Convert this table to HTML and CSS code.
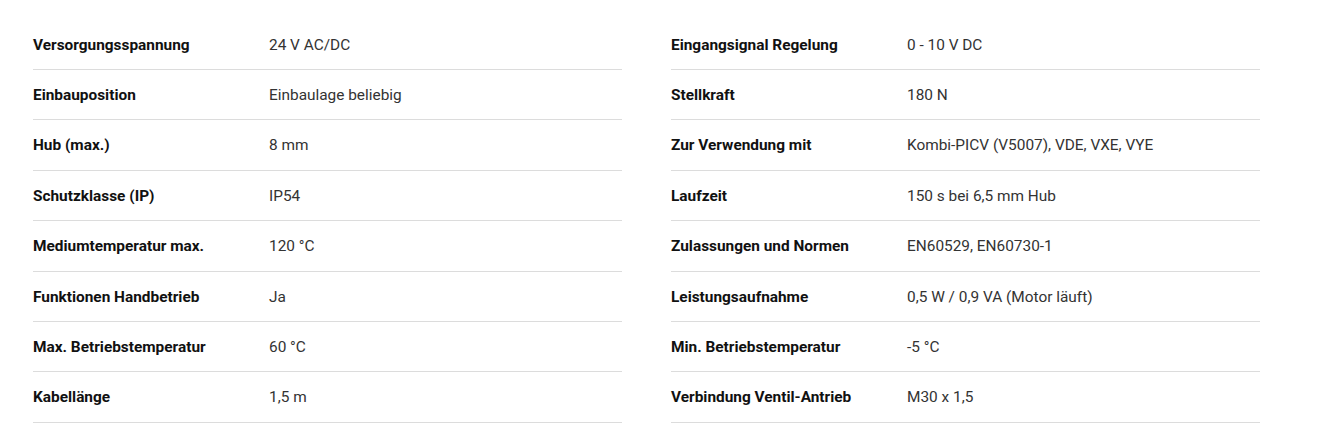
FILE: index.html
```html
<!DOCTYPE html>
<html lang="de">
<head>
<meta charset="utf-8">
<link rel="stylesheet" href="styles.css">
</head>
<body>
<div class="specs">
  <dl class="spec-table">
    <div class="row"><dt>Versorgungsspannung</dt><dd>24 V AC/DC</dd></div>
    <div class="row"><dt>Einbauposition</dt><dd>Einbaulage beliebig</dd></div>
    <div class="row"><dt>Hub (max.)</dt><dd>8 mm</dd></div>
    <div class="row"><dt>Schutzklasse (IP)</dt><dd>IP54</dd></div>
    <div class="row"><dt>Mediumtemperatur max.</dt><dd>120 °C</dd></div>
    <div class="row"><dt>Funktionen Handbetrieb</dt><dd>Ja</dd></div>
    <div class="row"><dt>Max. Betriebstemperatur</dt><dd>60 °C</dd></div>
    <div class="row"><dt>Kabellänge</dt><dd>1,5 m</dd></div>
  </dl>
  <dl class="spec-table">
    <div class="row"><dt>Eingangsignal Regelung</dt><dd>0 - 10 V DC</dd></div>
    <div class="row"><dt>Stellkraft</dt><dd>180 N</dd></div>
    <div class="row"><dt>Zur Verwendung mit</dt><dd>Kombi-PICV (V5007), VDE, VXE, VYE</dd></div>
    <div class="row"><dt>Laufzeit</dt><dd>150 s bei 6,5 mm Hub</dd></div>
    <div class="row"><dt>Zulassungen und Normen</dt><dd>EN60529, EN60730-1</dd></div>
    <div class="row"><dt>Leistungsaufnahme</dt><dd>0,5 W / 0,9 VA (Motor läuft)</dd></div>
    <div class="row"><dt>Min. Betriebstemperatur</dt><dd>-5 °C</dd></div>
    <div class="row"><dt>Verbindung Ventil-Antrieb</dt><dd>M30 x 1,5</dd></div>
  </dl>
</div>
</body>
</html>
```
FILE: styles.css
```css
html, body {
  margin: 0;
  padding: 0;
  background: #fff;
}
body {
  font-family: Roboto, "Liberation Sans", Arial, sans-serif;
  font-size: 15.4px;
  color: #222;
}
.specs {
  display: grid;
  grid-template-columns: 589px 589px;
  column-gap: 49px;
  padding: 19.6px 0 0 33px;
}
.spec-table {
  margin: 0;
}
.row {
  display: grid;
  grid-template-columns: 236px 1fr;
  padding: 16px 0 14px;
  line-height: 19.4px;
  border-bottom: 1px solid #dcdcdc;
}
dt {
  font-weight: 700;
  color: #111;
}
dd {
  margin: 0;
  color: #333;
}
```
